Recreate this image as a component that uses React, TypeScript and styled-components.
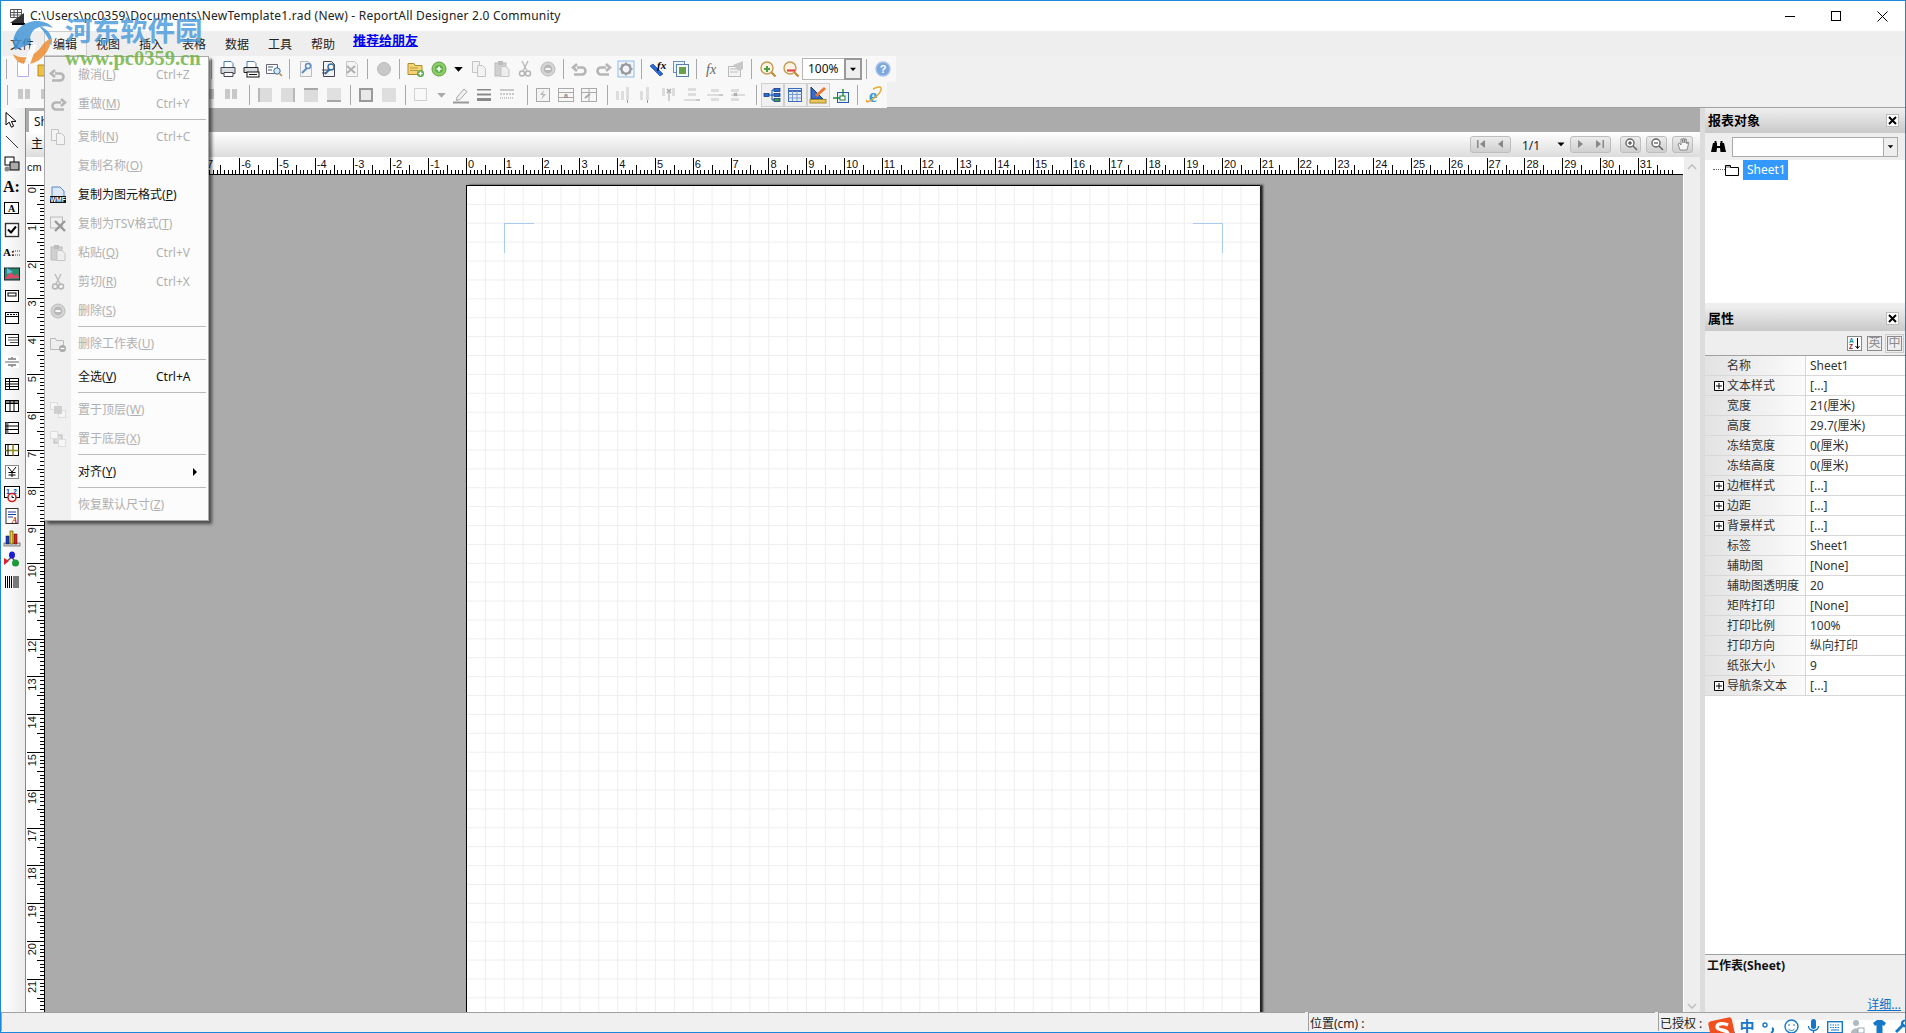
import React from 'react';
import styled, { createGlobalStyle } from 'styled-components';

const CJK = `"Noto Sans","Noto Sans CJK SC",sans-serif`;
const G = '#c4c4c4';

const Global = createGlobalStyle`
  html, body { margin: 0; padding: 0; overflow: hidden; background: #f0f0f0; }
  * { box-sizing: border-box; }
`;

const Win = styled.div`
  position: relative; width: 1906px; height: 1033px; display: flex; flex-direction: column;
  border: 1px solid #1a86dc; border-bottom: 0; background: #f0f0f0; font: 12px/1 ${CJK}; color: #111; overflow: hidden;
`;
const TitleBar = styled.div`height: 30px; background: #fff; display: flex; align-items: center; padding-left: 8px; flex: none;`;
const TitleText = styled.div`margin-left: 4px; font-size: 12px; color: #222; letter-spacing: 0.22px; padding-bottom: 1px;`;
const WinBtns = styled.div`margin-left: auto; display: flex; align-items: center; padding-right: 0;`;
const WinBtn = styled.div`width: 46px; height: 30px; display: flex; align-items: center; justify-content: center;`;
const MenuBar = styled.div`height: 25px; background: #eee; display: flex; flex: none; align-items: stretch;`;
const MenuItem = styled.div<{ $open?: boolean }>`
  width: 43px; padding-left: 9px; display: flex; align-items: center; color: #222; padding-top: 2px;
  ${p => p.$open ? 'background:#f6f6f6; box-shadow: inset 0 0 0 1px #ccc;' : ''}
`;
const Promo = styled.a`margin-left: 8px; font-size: 13px; font-weight: 700; color: #0000ee; text-decoration: underline; align-self: flex-start; padding-top: 3px;`;
const Bars = styled.div`flex: none; border-bottom: 1px solid #a0a0a0; height: 52px; background: #f0f0f0;`;
const Toolbar = styled.div<{ $first?: boolean }>`height: 26px; width: fit-content; display: flex; align-items: center; padding: 0 2px 0 ${p => p.$first ? 1 : 2}px; background: #f8f8f8;`;
const Slot = styled.div<{ $w?: number; $on?: boolean }>`
  width: ${p => p.$w ?? 23}px; height: 24px; flex: none; display: flex; align-items: center; justify-content: center;
  ${p => p.$on ? 'background:#f1f1f1; box-shadow: inset 0 0 0 1px #d0d0d0;' : ''}
`;
const SepSlot = styled.div`width: 9px; height: 24px; flex: none; display: flex; align-items: center; justify-content: center; &::before { content: ''; width: 1px; height: 20px; background: #a9a9a9; }`;
const ZoomCombo = styled.div`width: 60px; height: 22px; flex: none; display: flex; align-items: center; background: #fff; border: 1px solid #b5b5b5; padding-left: 5px; font-size: 12px;`;
const ZoomArrow = styled.div`margin-left: auto; width: 18px; height: 22px; margin-top: -1px; margin-bottom: -1px; margin-right: -1px; border: 2px solid #999; background: #eee; display: flex; align-items: center; justify-content: center;`;
const Main = styled.div`flex: 1; min-height: 0; display: flex;`;
const LeftTools = styled.div`width: 25px; flex: none; display: flex; flex-direction: column; background: linear-gradient(90deg,#fff,#ececec); border-right: 1px solid #8a8a8a; padding-top: 1px;`;
const LeftTool = styled.div`height: 22px; display: flex; align-items: center; justify-content: center; padding-right: 3px;`;
const Center = styled.div`flex: 1; min-width: 0; display: flex; flex-direction: column; background: #ababab;`;
const TabRow = styled.div`height: 24px; flex: none; display: flex; align-items: flex-end;`;
const Tab = styled.div`width: 60px; height: 21px; margin-left: 3px; background: #fff; font-size: 12px; padding: 5px 0 0 5px;`;
const NavStrip = styled.div`height: 25px; flex: none; display: flex; align-items: center; background: linear-gradient(#fff,#dcdcdc); padding-left: 5px; padding-bottom: 1px;`;
const NavLabel = styled.div`font-size: 12px; margin-right: auto;`;
const NavGroup = styled.div<{ $w: number }>`
  width: ${p => p.$w}px; height: 17px; flex: none; display: flex; align-items: center; justify-content: space-around;
  border: 1px solid #bdbdbd; border-radius: 3px; background: linear-gradient(#ececec,#cfcfcf);
`;
const PageCount = styled.div`width: 40px; flex: none; text-align: center; font-size: 12px; color: #222; padding-top: 3px;`;
const NavCaret = styled.div`width: 19px; flex: none; display: flex; justify-content: flex-start; padding-left: 3px;`;
const Work = styled.div`flex: 1; min-height: 0; display: flex;`;
const RulerArea = styled.div`flex: 1; min-width: 0; display: grid; grid-template-columns: 19px 1fr; grid-template-rows: 18px 1fr;`;
const CornerCm = styled.div`background: #fff; font: 11px "Liberation Sans", sans-serif; padding: 4px 0 0 1px; color: #111;`;
const HRulerBox = styled.div`background: #fff; overflow: hidden; height: 18px;`;
const VRulerBox = styled.div`background: #fff; overflow: hidden;`;
const Canvas = styled.div`background: #ababab; padding: 10px 0 0 421px; overflow: hidden; min-height: 0;`;
const Page = styled.div`
  position: relative; width: 794px; height: 1123px; background-color: #fff;
  border-top: 1px solid #000; border-left: 1px solid #000; box-shadow: 3px 0 2px #222;
  background-image: linear-gradient(#eeeeee 1px, transparent 1px), linear-gradient(90deg, #eeeeee 1px, transparent 1px);
  background-size: 18.9px 18.9px; background-position: -1px -1px;
`;
const Mark = styled.div<{ $right?: boolean }>`
  position: absolute; top: 37px; width: 30px; height: 30px; border-top: 1px solid #a9cbee;
  ${p => p.$right ? 'right: 37px; border-right: 1px solid #a9cbee;' : 'left: 37px; border-left: 1px solid #a9cbee;'}
`;
const VScroll = styled.div`width: 17px; flex: none; background: #eee; border-left: 1px solid #fff; display: flex; flex-direction: column; justify-content: space-between; align-items: center; padding: 5px 0 1px;`;
const Splitter = styled.div`width: 5px; flex: none; background: #dcdcdc;`;
const Right = styled.div`width: 200px; flex: none; display: flex; flex-direction: column; background: #eee;`;
const PanelHead = styled.div`height: 25px; flex: none; display: flex; align-items: center; padding: 0 6px 0 3px; background: linear-gradient(#efefef,#c9c9c9); font-size: 13px; font-weight: 700; color: #000;`;
const PanelClose = styled.div`margin-left: auto; width: 13px; height: 13px; background: #fff; border: 1px solid #bbb; display: flex; align-items: center; justify-content: center;`;
const SearchRow = styled.div`height: 27px; flex: none; display: flex; align-items: center; padding-left: 6px; background: #eee;`;
const SearchInput = styled.div`margin-left: 6px; width: 166px; height: 20px; background: #fff; border: 1px solid #aaa; display: flex; justify-content: flex-end;`;
const SearchBtn = styled.div`width: 14px; background: #eee; border-left: 1px solid #aaa; display: flex; align-items: center; justify-content: center;`;
const Tree = styled.div`height: 143px; flex: none; background: #fff; display: flex; align-items: flex-start; padding-left: 8px; margin-bottom: 3px;`;
const TreeDots = styled.div`width: 12px; height: 10px; border-bottom: 1px dotted #666; flex: none;`;
const TreeLabel = styled.div`height: 20px; margin-left: 4px; padding: 4px 2px 0 4px; background: #3399ff; color: #fff; font-size: 12px;`;
const TreeIcon = styled.div`height: 20px; display: flex; align-items: center;`;
const PropTools = styled.div`height: 25px; flex: none; display: flex; align-items: center; justify-content: flex-end; gap: 5px; padding-right: 3px; border-bottom: 1px solid #a0a0a0; background: #eee;`;
const ModeBtn = styled.div<{ $on?: boolean }>`
  width: 15px; height: 15px; border: 1px solid #8a8a8a; color: #8a8a8a; font-size: 12px; display: flex; align-items: center; justify-content: center;
  ${p => p.$on ? 'outline: 1px solid #ccc; outline-offset: 1px;' : ''}
`;
const SortBtn = styled.div`width: 15px; height: 15px;`;
const Grid = styled.div`flex: 1; min-height: 0; background: #fff; border-bottom: 1px solid #a0a0a0;`;
const Row = styled.div`height: 20px; display: flex; border-bottom: 1px solid #d8d8d8;`;
const RowLabel = styled.div`width: 101px; flex: none; display: flex; align-items: center; padding-left: 9px; border-right: 1px solid #d8d8d8; background: linear-gradient(90deg,#e3e3e3,#fbfbfb); color: #333;`;
const RowExp = styled.div`width: 13px; flex: none; display: flex; align-items: center;`;
const RowValue = styled.div`padding-left: 4px; display: flex; align-items: center; color: #333;`;
const Desc = styled.div`height: 57px; flex: none; position: relative; background: #eee; padding: 5px 2px; font-weight: 700; font-size: 12px;`;
const DescLink = styled.a`position: absolute; right: 4px; bottom: 1px; color: #0a6fc8; text-decoration: underline; font-weight: 400;`;
const Status = styled.div`height: 21px; flex: none; display: flex; gap: 3px; background: #f0f0f0; padding-bottom: 1px; border-bottom: 1px solid #1a86dc;`;
const StatusCell = styled.div<{ $w: number }>`width: ${p => p.$w}px; flex: none; border-top: 1px solid #a0a0a0; border-left: 1px solid #a0a0a0; padding: 5px 0 0 1px; color: #222;`;
const Ime = styled.div`position: absolute; left: 1734px; right: 0; top: 1019px; bottom: 0; background: #fff; display: flex; align-items: center; padding-left: 1px;`;
const ImeSlot = styled.div<{ $w?: number }>`width: ${p => p.$w ?? 22}px; flex: none; display: flex; justify-content: center; align-items: center; color: #1678c8; font-size: 15px; font-weight: 700;`;
const ImeLogo = styled.div`position: absolute; left: 1706px; top: 1015px; width: 30px; height: 18px; overflow: hidden;`;
const Menu = styled.div`
  position: absolute; left: 43px; top: 55px; width: 165px; height: 465px; padding: 3px 0; border: 1px solid #aaa;
  background: linear-gradient(90deg,#f0f0f0 26px,#fcfcfc 26px); box-shadow: 3px 3px 3px rgba(0,0,0,.55);
`;
const MenuRow = styled.div<{ $off?: boolean }>`height: 29px; display: flex; align-items: center; color: ${p => p.$off ? '#b0b0b0' : '#111'};`;
const MenuGlyph = styled.div`width: 26px; flex: none; display: flex; justify-content: center;`;
const MenuLabel = styled.div`width: 78px; flex: none; margin-left: 7px; white-space: nowrap;`;
const MenuKey = styled.div`white-space: nowrap; font-size: 12px;`;
const MenuArrow = styled.div`margin-left: 37px; width: 0; height: 0; border-left: 4px solid #000; border-top: 4px solid transparent; border-bottom: 4px solid transparent;`;
const MenuSep = styled.div`height: 4px; margin-left: 33px; margin-right: 2px; padding-top: 1px; &::before { content: ''; display: block; height: 1px; background: #bbb; }`;
const Water = styled.div`position: absolute; left: 8px; top: 12px; width: 200px; height: 60px; opacity: .82;`;
const WaterTitle = styled.div`position: absolute; left: 56px; top: 1px; font: 700 27.500px/1.1 "Noto Sans CJK SC", sans-serif; color: #4a9bdc; white-space: nowrap;`;
const WaterUrl = styled.div`position: absolute; left: 56px; top: 34px; font: 700 20.500px/1.1 "Liberation Serif", serif; color: #6cb23e; white-space: nowrap;`;
const WaterLogo = styled.div`position: absolute; left: -2px; top: 4px;`;

const Svg = ({ s = 18, v = 18, children }: { s?: number; v?: number; children: React.ReactNode }) => (
  <svg width={s} height={s} viewBox={`0 0 ${v} ${v}`} fill="none" style={{ display: 'block' }}>{children}</svg>
);
const Doc = ({ c = G }: { c?: string }) => <path d="M3.5 1.5h8l3 3v12h-11z" fill="#f4f4f4" stroke={c} />;
const Bars3 = ({ c = '#c8c8c8' }: { c?: string }) => <g fill={c}><rect x="3" y="3" width="5" height="10" /><rect x="10" y="3" width="5" height="10" /></g>;

const icons: Record<string, React.ReactNode> = {
  newDoc: <path d="M3.5 1.5h11v15h-11z" fill="#fff" stroke="#b8b0ea" />,
  open: <g><path d="M1 5h6l1 2h8v9H1z" fill="#f0c040" stroke="#b88a20" /></g>,
  hidden: <rect x="3" y="3" width="12" height="12" fill="#ddd" />,
  print: <g><path d="M5 1.5h7l2 2v4H5z" fill="#fff" stroke="#4a7db0" /><path d="M2 7.5h14v6H2z" fill="#d8dde2" stroke="#445" /><path d="M5 12.5h9v4H5z" fill="#fff" stroke="#445" /></g>,
  printP: <g><path d="M5 1.5h7l2 2v4H5z" fill="#fff" stroke="#4a7db0" /><path d="M2 7.5h14v5H2z" fill="#d8dde2" stroke="#222" /><rect x="5" y="12" width="12" height="5" fill="#fff" stroke="#111" /><path d="M7 14.5h8" stroke="#111" /></g>,
  preview: <g><path d="M1.5 4.5h11v9h-11z" fill="#fff" stroke="#667" /><path d="M3 7h5M3 10h4" stroke="#456" /><circle cx="12" cy="11" r="3.2" fill="#d6e6f5" stroke="#3a6ea0" /><path d="M14.5 13.5l2.5 2.5" stroke="#c08a30" strokeWidth="1.6" /></g>,
  wrench1: <g><Doc c="#bbb" /><path d="M5 13l5-5" stroke="#5a8cc0" strokeWidth="2" /><circle cx="11" cy="6" r="2.5" stroke="#5a8cc0" strokeWidth="1.4" /></g>,
  wrench2: <g><Doc c="#445" /><path d="M5 14l5-5" stroke="#3a6ea0" strokeWidth="2" /><circle cx="11" cy="7" r="3" stroke="#3a6ea0" strokeWidth="1.4" /><path d="M2 10h6M2 13h4" stroke="#445" /></g>,
  xdoc: <g><Doc /><path d="M4 6l8 7M12 6l-8 7" stroke="#b0b0b0" strokeWidth="2" /></g>,
  dot: <circle cx="9" cy="9" r="6.5" fill="#c8c8c8" stroke="#bbb" />,
  folderAdd: <g><path d="M1 3.5h6l1 2h7v9H1z" fill="#f4d470" stroke="#b08a30" /><path d="M3 8h8M3 10.5h8" stroke="#b89a50" /><circle cx="13.5" cy="13.5" r="3.5" fill="#58a848" /><path d="M11.5 13.5h4M13.5 11.5v4" stroke="#fff" strokeWidth="1.3" /></g>,
  plus: <g><circle cx="9" cy="9" r="7" fill="#8fcc6a" stroke="#5fa045" /><circle cx="9" cy="9" r="4" fill="#5db04a" /><path d="M6.5 9h5M9 6.5v5" stroke="#fff" strokeWidth="1.6" /></g>,
  caret: <path d="M4.5 7h9L9 12z" fill="#000" />,
  caretG: <path d="M4.5 7h9L9 12z" fill="#aaa" />,
  copy: <g><path d="M2.5 1.5h7v11h-7z" fill="#f3f3f3" stroke={G} /><path d="M7.5 5.5h5l3 3v8h-8z" fill="#f3f3f3" stroke={G} /></g>,
  paste: <g><rect x="2" y="3" width="11" height="13" fill="#d0d0d0" stroke="#bbb" /><rect x="5" y="1" width="5" height="4" fill="#bbb" /><path d="M8 6.5h5l3 3v7H8z" fill="#eee" stroke={G} /></g>,
  cut: <g><path d="M12 1L7 11M6 1l5 10" stroke="#bbb" strokeWidth="1.4" /><circle cx="6" cy="13.5" r="2.5" stroke="#b5b5b5" strokeWidth="1.5" /><circle cx="12" cy="13.5" r="2.5" stroke="#b5b5b5" strokeWidth="1.5" /></g>,
  minus: <g><circle cx="9" cy="9" r="7" fill="#d5d5d5" stroke="#bbb" /><circle cx="9" cy="9" r="4.3" fill="#b8b8b8" /><path d="M6.5 9h5" stroke="#fff" strokeWidth="1.8" /></g>,
  undo: <path d="M15 14.5H7a3.5 3.5 0 0 1 0-7h5M12 4l4 3.5-4 3.5" transform="matrix(-1 0 0 1 18 0)" stroke="#b5b5b5" strokeWidth="2.6" />,
  redo: <path d="M15 14.5H7a3.5 3.5 0 0 1 0-7h5M12 4l4 3.5-4 3.5" stroke="#b5b5b5" strokeWidth="2.6" />,
  gear: <g><rect x="1" y="1" width="16" height="16" fill="#f0f4fa" stroke="#8fbce8" /><circle cx="9" cy="9" r="4.6" stroke="#999" strokeWidth="2.4" /><path d="M9 2.5v2.5M9 13v2.5M2.5 9H5M13 9h2.5M4.5 4.5l2 2M11.5 11.5l2 2M13.5 4.5l-2 2M6.5 11.5l-2 2" stroke="#999" strokeWidth="1.8" /></g>,
  fxPen: <g><path d="M1 6l10 10 3-2L4 4z" fill="#2a6ad0" stroke="#123a8a" strokeWidth=".6" /><text x="8" y="9" fontFamily="Liberation Serif" fontStyle="italic" fontWeight="700" fontSize="11" fill="#000">fx</text></g>,
  images: <g><rect x="1.5" y="1.5" width="11" height="11" fill="#eaf2fa" stroke="#6a90b8" /><rect x="4.5" y="4.5" width="12" height="12" fill="#f4f8fc" stroke="#5a80a8" /><rect x="7" y="7" width="7" height="7" fill="#6aa04a" /></g>,
  fx: <text x="2" y="14" fontFamily="Liberation Serif" fontStyle="italic" fontSize="14" fill="#666">fx</text>,
  propDoc: <g><rect x="1.5" y="6.5" width="12" height="10" fill="#f4f4f4" stroke="#bbb" /><path d="M3 9h8M3 12h8" stroke="#bbb" /><path d="M6 5l10-4v8l-4 2z" fill="#c8c8c8" /></g>,
  zoomIn: <g><circle cx="8" cy="8" r="6" fill="#fbf4e4" stroke="#c89a50" strokeWidth="1.4" /><path d="M12.5 12.5l4 4" stroke="#c08a30" strokeWidth="2.2" /><path d="M5 9h6M8 6v6" stroke="#4da040" strokeWidth="2" /></g>,
  zoomOut: <g><circle cx="8" cy="8" r="6" fill="#fbf4e4" stroke="#c89a50" strokeWidth="1.4" /><path d="M12.5 12.5l4 4" stroke="#c08a30" strokeWidth="2.2" /><path d="M5 10.5h8" stroke="#e04848" strokeWidth="2.2" /></g>,
  help: <g><circle cx="9" cy="9" r="7" fill="#7ea8dc" stroke="#a8c4e8" strokeWidth="1.4" /><text x="9" y="13" textAnchor="middle" fontFamily="Liberation Sans" fontWeight="700" fontSize="11" fill="#fff">?</text></g>,
  barsA: <Bars3 />,
  alignL: <g><rect x="2" y="2" width="14" height="14" fill="#dcdcdc" /><rect x="2" y="2" width="2" height="14" fill="#b8b8b8" /></g>,
  alignR: <g><rect x="2" y="2" width="14" height="14" fill="#dcdcdc" /><rect x="14" y="2" width="2" height="14" fill="#b8b8b8" /></g>,
  alignT: <g><rect x="2" y="2" width="14" height="14" fill="#dcdcdc" /><rect x="2" y="2" width="14" height="2" fill="#a8a8a8" /></g>,
  alignB: <g><rect x="2" y="2" width="14" height="14" fill="#e0e0e0" /><rect x="2" y="14" width="14" height="2" fill="#a8a8a8" /></g>,
  box: <rect x="3" y="3" width="12" height="12" fill="#e8e8e8" stroke="#9a9a9a" strokeWidth="2" />,
  boxF: <rect x="2" y="2" width="14" height="14" fill="#dedede" />,
  gridD: <rect x="2.5" y="2.5" width="12" height="12" stroke="#aaa" strokeDasharray="1 1" />,
  pen: <g><path d="M5 11l7-8 3 2.5-7 8-3.5 1z" fill="#f0f0f0" stroke="#aaa" /><rect x="1" y="15.5" width="16" height="2" fill="#9a9a9a" /></g>,
  lines: <g fill="#8a8a8a"><rect x="2" y="3" width="14" height="1.5" /><rect x="2" y="7.5" width="14" height="2" /><rect x="2" y="12" width="14" height="3" /></g>,
  dashes: <g stroke="#9a9a9a"><path d="M2 4h14" /><path d="M2 8h14" strokeDasharray="2 1" /><path d="M2 12h14" strokeDasharray="1 1" /></g>,
  bolt: <g><rect x="2.5" y="2.5" width="13" height="13" fill="#f4f4f4" stroke="#aaa" /><path d="M10 4l-4 5h3l-2 5 5-6H9z" fill="#b8b8b8" /></g>,
  cellA: <g><rect x="1.5" y="2.5" width="15" height="13" fill="#f6f6f6" stroke="#aaa" /><path d="M1.5 6.5h15M1.5 11.5h15" stroke="#aaa" /><text x="9" y="11.5" textAnchor="middle" fontSize="7" fontWeight="700" fontFamily="Liberation Sans" fill="#888">a</text></g>,
  cellB: <g><rect x="1.5" y="2.5" width="15" height="13" fill="#f6f6f6" stroke="#aaa" /><path d="M1.5 6.5h15M9 2.5v13" stroke="#aaa" /><path d="M5 12l5-4" stroke="#aaa" strokeWidth="2" /></g>,
  distA: <g fill="#ddd"><rect x="2" y="5" width="3" height="9" /><rect x="7" y="5" width="3" height="9" /><rect x="12" y="1" width="3" height="13" /><path d="M13.5 14v3" stroke="#999" /></g>,
  distB: <g fill="#ddd"><rect x="3" y="5" width="3" height="9" /><rect x="9" y="1" width="3" height="13" /><path d="M10.5 14v3" stroke="#999" /></g>,
  distC: <g fill="#ddd"><rect x="2" y="2" width="3" height="8" /><rect x="12" y="2" width="3" height="8" /><path d="M7 3l4 4M11 3l-4 4" stroke="#aaa" strokeWidth="1.5" /><path d="M9 7v8" stroke="#aaa" /></g>,
  distD: <g fill="#ddd"><rect x="5" y="2" width="8" height="3" /><rect x="5" y="7" width="8" height="3" /><rect x="1" y="13" width="12" height="2" /><path d="M13 14h4" stroke="#999" /></g>,
  distE: <g fill="#ddd"><rect x="5" y="3" width="8" height="3" /><rect x="1" y="8" width="12" height="2" /><rect x="5" y="12" width="8" height="3" /><path d="M13 9h4" stroke="#999" /></g>,
  distF: <g fill="#ddd"><rect x="2" y="3" width="8" height="3" /><rect x="2" y="8" width="14" height="2" /><rect x="2" y="12" width="8" height="3" /><path d="M5 7l3 3M8 7l-3 3" stroke="#aaa" strokeWidth="1.5" /></g>,
  tree: <g><path d="M9 4v10M5 9h4M9 4h2M9 9h2M9 14h2" stroke="#0a50a8" /><g fill="#2a6ac8" stroke="#0a2a80" strokeWidth=".7"><rect x="1" y="7.5" width="5" height="3" /><rect x="11" y="2.5" width="6" height="3" /><rect x="11" y="7.5" width="6" height="3" /><rect x="11" y="12.5" width="6" height="3" fill="#3a9a50" /></g></g>,
  sheet: <g><rect x="2.5" y="2.5" width="13" height="13" fill="#e4eefa" stroke="#3a6ab8" /><path d="M2.5 5h13" stroke="#3a6ab8" strokeWidth="2" /><path d="M2.5 8.5h13M2.5 12h13M6.5 5v10M11 5v10" stroke="#7a9ad0" /></g>,
  ruler: <g><path d="M2 1v12h12z" fill="#3a6ac8" stroke="#123a8a" /><path d="M6 9l9-8 2 2-9 8z" fill="#e87830" /><rect x="1" y="13.5" width="16" height="3.5" fill="#e8c860" stroke="#a08830" /></g>,
  nodeBox: <g><rect x="5.5" y="6.5" width="11" height="10" fill="#e8f0fa" stroke="#2a5ab0" /><rect x="8" y="10" width="5" height="4" fill="#fff" stroke="#2a7a40" /><path d="M1 12h7M11 10V3" stroke="#1a8a30" strokeWidth="1.4" /></g>,
  ie: <g><text x="9" y="15.5" textAnchor="middle" fontFamily="Liberation Serif" fontWeight="700" fontSize="19" fill="#3a9ae0">e</text><path d="M3 14C1 17 5 16 9 13c4-3 9-8 8-11-1-2-6 0-8 1" stroke="#e8a830" strokeWidth="1.4" /></g>,
  cursor: <path d="M3 1.5v12.5l3.2-2.8 2.2 5 2.2-1-2.2-4.8H13z" fill="#fff" stroke="#000" />,
  line: <path d="M3 3l12 12" stroke="#333" />,
  shapes: <g><rect x="2" y="2" width="9" height="8" fill="#fff" stroke="#000" /><rect x="7" y="7" width="9" height="8" fill="#aaa" stroke="#000" /><circle cx="4" cy="14" r="2.5" fill="#888" /></g>,
  aColon: <text x="0" y="15" fontFamily="Liberation Serif" fontWeight="700" fontSize="16" fill="#000">A:</text>,
  aBox: <g><rect x="1.5" y="3.5" width="14" height="11" fill="#fff" stroke="#000" /><text x="8.5" y="12.5" textAnchor="middle" fontFamily="Liberation Serif" fontWeight="700" fontSize="10" fill="#000">A</text></g>,
  check: <g><rect x="2.5" y="2.5" width="13" height="13" fill="#fff" stroke="#333" strokeWidth="1.4" /><path d="M5 8.5l3 3 5-6" stroke="#000" strokeWidth="2" /></g>,
  aDots: <g><text x="0" y="13" fontFamily="Liberation Serif" fontWeight="700" fontSize="11" fill="#000">A:</text><path d="M10 8h8M10 12h8" stroke="#444" strokeDasharray="1 1" /></g>,
  image: <g><rect x="1.5" y="3" width="15" height="12" fill="#2a8a6a" stroke="#123" /><path d="M1.5 14l6-7 4 4 2-2 3 3v1z" fill="#e04868" /><path d="M4 3l6 4-6 2z" fill="#58c0e8" /></g>,
  frame: <g><rect x="2.5" y="3.5" width="13" height="11" fill="#fff" stroke="#000" /><rect x="5" y="6" width="8" height="3" stroke="#000" /></g>,
  win: <g><rect x="2.5" y="3.5" width="13" height="11" fill="#fff" stroke="#000" /><path d="M2.5 7.5h13" stroke="#000" /><path d="M4 5.5h10" stroke="#000" strokeDasharray="2 1" /></g>,
  rows: <g><rect x="2.5" y="3.5" width="13" height="11" fill="#fff" stroke="#000" /><path d="M5 6.5h10M5 9h10M7 11.5h8" stroke="#555" /></g>,
  split: <g><rect x="2" y="3" width="14" height="12" fill="#fff" /><path d="M2 9h14" stroke="#666" /><path d="M5 6h3M10 6h3M5 12h3M10 12h3M9 4v3M9 11v3" stroke="#333" /></g>,
  table: <g><rect x="2.5" y="3.5" width="13" height="11" fill="#fff" stroke="#000" /><path d="M2.5 6.5h13M2.5 9h13M2.5 11.5h13M6.5 3.5v11" stroke="#000" /></g>,
  cols: <g><rect x="2.5" y="3.5" width="13" height="11" fill="#fff" stroke="#000" /><path d="M2.5 3.5h13v3h-13z" fill="#888" stroke="#000" /><path d="M7 3.5v11M11 3.5v11" stroke="#000" /></g>,
  rowsT: <g><rect x="2.5" y="3.5" width="13" height="11" fill="#fff" stroke="#000" /><rect x="2.5" y="3.5" width="3" height="11" fill="#777" /><path d="M2.5 7h13M2.5 10.5h13" stroke="#000" /></g>,
  cross: <g><rect x="2.5" y="3.5" width="13" height="11" fill="#fff" stroke="#000" /><path d="M2.5 9.5h13M10 3.5v11" stroke="#8a8a20" strokeWidth="1.6" /><path d="M5 3.5v11" stroke="#000" /></g>,
  yen: <g><rect x="2.5" y="2.5" width="13" height="13" fill="#fff" stroke="#888" /><path d="M5 4l4 5 4-5M9 9v5M5.5 9.5h7M5.5 12h7" stroke="#000" /></g>,
  cal: <g><rect x="1.5" y="1.5" width="15" height="11" fill="#fff" stroke="#000" /><text x="3" y="8.5" fontFamily="Liberation Sans" fontWeight="700" fontSize="7" fill="#0a3aa8">1</text><text x="10" y="8.5" fontFamily="Liberation Sans" fontWeight="700" fontSize="7" fill="#0a3aa8">2</text><circle cx="9" cy="12.5" r="4" fill="#fff" stroke="#d02020" strokeWidth="1.6" /><path d="M9 10.5v2h2" stroke="#000" /></g>,
  report: <g><rect x="3" y="1.5" width="12" height="15" fill="#fff" stroke="#333" /><path d="M5 5h8M5 7.5h8M5 10h5" stroke="#1a3aa8" /><text x="9" y="15.5" fontFamily="Liberation Serif" fontStyle="italic" fontWeight="700" fontSize="8" fill="#d02020">A</text></g>,
  chart: <g><rect x="1" y="14" width="16" height="3" fill="#ddd" stroke="#333" strokeWidth=".6" /><rect x="3" y="7" width="3" height="8" fill="#1a3ad8" stroke="#111" strokeWidth=".5" /><rect x="7" y="2" width="3" height="13" fill="#e8d020" stroke="#111" strokeWidth=".5" /><rect x="11" y="5" width="3" height="10" fill="#e02020" stroke="#111" strokeWidth=".5" /></g>,
  net: <g><path d="M4 10l5-4 5 8" stroke="#555" strokeWidth="1.5" /><ellipse cx="9" cy="4" rx="3" ry="3.5" fill="#1a1ad8" /><circle cx="12.5" cy="12" r="3.5" fill="#1a9a3a" /><path d="M1 7l5 3-5 4z" fill="#e02030" /></g>,
  barcode: <path d="M2.500 3v12M4.500 3v12M6.500 3v12M8.500 3v12M11 3v12M13 3v12M15 3v12" stroke="#000" />,
  wmf: <g><path d="M3 1h8l4 4v6H3z" fill="#dce8f8" stroke="#5a8ac0" /><rect x="1" y="10" width="16" height="7" fill="#111" /><text x="9" y="16" textAnchor="middle" fontFamily="Liberation Sans" fontWeight="700" fontSize="6.5" fill="#fff">WMF</text></g>,
  tsv: <g><rect x="1.5" y="2" width="12" height="11" fill="#f0f0f0" stroke="#bbb" /><path d="M6 6l10 10M16 6L6 16" stroke="#999" strokeWidth="2.4" /></g>,
  delSheet: <g><path d="M1.5 3.5h5l1 2h7v9h-13z" fill="#eee" stroke="#bbb" /><circle cx="13.5" cy="13.5" r="3.5" fill="#aaa" /><path d="M11.5 13.5h4" stroke="#fff" strokeWidth="1.3" /></g>,
  top: <g><rect x="1.5" y="1.5" width="7" height="7" fill="#f6f6f6" stroke="#ddd" /><rect x="9.5" y="9.5" width="7" height="7" fill="#f6f6f6" stroke="#ddd" /><rect x="5" y="5" width="8" height="8" fill="#cfcfcf" /></g>,
  bottom: <g><rect x="5" y="5" width="8" height="8" fill="#dcdcdc" stroke="#bbb" /><rect x="1.5" y="1.5" width="7" height="7" fill="#f6f6f6" stroke="#ddd" /><rect x="9.5" y="9.5" width="7" height="7" fill="#f6f6f6" stroke="#ddd" /></g>,
};

const Ic = ({ n, s }: { n: string; s?: number }) => <Svg s={s}>{icons[n]}</Svg>;

type T = string | [string, number];
const row1: T[] = ['|', 'newDoc', 'open', 'hidden', 'hidden', 'hidden', 'hidden', 'hidden', 'hidden', ['gap', 12], '|', 'print', 'printP', 'preview', '|', 'wrench1', 'wrench2', 'xdoc', '|', 'dot', '|', 'folderAdd', 'plus', ['caret', 17], 'copy', 'paste', 'cut', 'minus', '|', 'undo', 'redo', 'gear', '|', 'fxPen', 'images', '|', 'fx', 'propDoc', '|', 'zoomIn', 'zoomOut', 'COMBO', '|', 'help'];
const row2: T[] = ['|', 'barsA', 'barsA', 'hidden', 'hidden', 'hidden', 'hidden', 'hidden', 'hidden', 'barsA', 'barsA', ['gap', 2.5], '|', 'alignL', 'alignR', 'alignT', 'alignB', '|', 'box', 'boxF', '|', 'gridD', ['caretG', 17], 'pen', 'lines', 'dashes', ['gap', 4], '|', 'bolt', 'cellA', 'cellB', ['gap', 2], '|', 'distA', 'distB', 'distC', 'distD', 'distE', 'distF', ['gap', 2], '|', '*tree', '*sheet', '*ruler', 'nodeBox', '|', 'ie'];

const Tools = ({ items, first }: { items: T[]; first?: boolean }) => (
  <Toolbar $first={first}>
    {items.map((t, i) => {
      if (t === '|') return <SepSlot key={i} />;
      if (t === 'COMBO') return <ZoomCombo key={i}>100%<ZoomArrow><Svg s={12}>{icons.caret}</Svg></ZoomArrow></ZoomCombo>;
      if (Array.isArray(t)) return t[0] === 'gap' ? <Slot key={i} $w={t[1]} /> : <Slot key={i} $w={t[1]}><Ic n={t[0]} /></Slot>;
      const on = t.startsWith('*');
      return <Slot key={i} $on={on}><Ic n={on ? t.slice(1) : t} /></Slot>;
    })}
  </Toolbar>
);

const CM = 37.8;
const HRuler = () => {
  const o = 421;
  const cms = Array.from({ length: 44 }, (_, i) => i - 12);
  const ticks: React.ReactNode[] = [];
  for (const c of cms) {
    for (let k = 0; k < 10; k++) {
      const x = Math.round(o + (c + k / 10) * CM) + 0.5;
      if (x < 0 || x > 1640) continue;
      const y1 = k === 0 ? 1 : k === 5 ? 8 : 13;
      ticks.push(<path key={`${c}-${k}`} d={`M${x} ${y1}V17`} stroke="#000" />);
    }
  }
  return (
    <svg width="1638" height="18" style={{ display: 'block' }}>
      <path d="M0 17.5H1638" stroke="#000" />
      {ticks}
      {cms.map(c => <text key={c} x={o + c * CM + 2} y="11" fontFamily="Liberation Sans" fontSize="11" fill="#111">{c}</text>)}
    </svg>
  );
};
const VRuler = () => {
  const o = 10;
  const cms = Array.from({ length: 22 }, (_, i) => i);
  const ticks: React.ReactNode[] = [];
  for (const c of cms) {
    for (let k = 0; k < 10; k++) {
      const y = Math.round(o + (c + k / 10) * CM) + 0.5;
      const x1 = k === 0 ? 1 : k === 5 ? 11 : 14;
      ticks.push(<path key={`${c}-${k}`} d={`M${x1} ${y}H18`} stroke="#000" />);
    }
  }
  return (
    <svg width="19" height="840" style={{ display: 'block' }}>
      <path d="M18.5 0V840" stroke="#000" />
      {ticks}
      {cms.map(c => {
        const y = o + c * CM + 2;
        return <text key={c} x="10" y={y} transform={`rotate(-90 10 ${y})`} textAnchor="end" fontFamily="Liberation Sans" fontSize="11" fill="#111">{c}</text>;
      })}
    </svg>
  );
};

const leftTools = ['cursor', 'line', 'shapes', 'aColon', 'aBox', 'check', 'aDots', 'image', 'frame', 'win', 'rows', 'split', 'table', 'cols', 'rowsT', 'cross', 'yen', 'cal', 'report', 'chart', 'net', 'barcode'];

type MI = { l?: string; u?: string; k?: string; i?: string; off?: boolean; sep?: boolean; arrow?: boolean };
const menu: MI[] = [
  { l: '撤消', u: 'L', k: 'Ctrl+Z', i: 'undo', off: true },
  { l: '重做', u: 'M', k: 'Ctrl+Y', i: 'redo', off: true },
  { sep: true },
  { l: '复制', u: 'N', k: 'Ctrl+C', i: 'copy', off: true },
  { l: '复制名称', u: 'O', off: true },
  { l: '复制为图元格式', u: 'P', i: 'wmf' },
  { l: '复制为TSV格式', u: 'T', i: 'tsv', off: true },
  { l: '粘贴', u: 'Q', k: 'Ctrl+V', i: 'paste', off: true },
  { l: '剪切', u: 'R', k: 'Ctrl+X', i: 'cut', off: true },
  { l: '删除', u: 'S', i: 'minus', off: true },
  { sep: true },
  { l: '删除工作表', u: 'U', i: 'delSheet', off: true },
  { sep: true },
  { l: '全选', u: 'V', k: 'Ctrl+A' },
  { sep: true },
  { l: '置于顶层', u: 'W', i: 'top', off: true },
  { l: '置于底层', u: 'X', i: 'bottom', off: true },
  { sep: true },
  { l: '对齐', u: 'Y', arrow: true },
  { sep: true },
  { l: '恢复默认尺寸', u: 'Z', off: true },
];

const props: [string, string, boolean][] = [
  ['名称', 'Sheet1', false], ['文本样式', '[...]', true], ['宽度', '21(厘米)', false], ['高度', '29.7(厘米)', false],
  ['冻结宽度', '0(厘米)', false], ['冻结高度', '0(厘米)', false], ['边框样式', '[...]', true], ['边距', '[...]', true],
  ['背景样式', '[...]', true], ['标签', 'Sheet1', false], ['辅助图', '[None]', false], ['辅助图透明度', '20', false],
  ['矩阵打印', '[None]', false], ['打印比例', '100%', false], ['打印方向', '纵向打印', false], ['纸张大小', '9', false], ['导航条文本', '[...]', true],
];

const Close = () => <PanelClose><Svg s={9} v={9}><path d="M1 1l7 7M8 1L1 8" stroke="#000" strokeWidth="2" /></Svg></PanelClose>;
const navI = (d: string) => <Svg s={12} v={12}><path d={d} fill="#888" /></Svg>;

export default function App() {
  return (
    <>
      <Global />
      <Win>
        <TitleBar>
          <Svg s={17} v={17}>
            <path d="M1.5 1.5h11v8h-11zM1.5 4.5h11M1.5 7h11M5 1.5v8M8.5 1.5v8" stroke="#555" />
            <path d="M1 15L15 5v10z" fill="#333" /><path d="M3 16h13" stroke="#000" strokeWidth="2" />
          </Svg>
          <TitleText>C:\Users\pc0359\Documents\NewTemplate1.rad (New) - ReportAll Designer 2.0 Community</TitleText>
          <WinBtns>
            <WinBtn><svg width="10" height="10"><path d="M0 5.5H10" stroke="#000" /></svg></WinBtn>
            <WinBtn><svg width="10" height="10"><rect x=".5" y=".5" width="9" height="9" fill="none" stroke="#000" /></svg></WinBtn>
            <WinBtn><svg width="11" height="11"><path d="M.5 .5l10 10M10.5 .5l-10 10" stroke="#000" /></svg></WinBtn>
          </WinBtns>
        </TitleBar>
        <MenuBar>
          {['文件', '编辑', '视图', '插入', '表格', '数据', '工具', '帮助'].map((m, i) => <MenuItem key={m} $open={i === 1}>{m}</MenuItem>)}
          <Promo>推荐给朋友</Promo>
        </MenuBar>
        <Bars>
          <Tools items={row1} first />
          <Tools items={row2} />
        </Bars>
        <Main>
          <LeftTools>{leftTools.map((t, i) => <LeftTool key={i}><Ic n={t} /></LeftTool>)}</LeftTools>
          <Center>
            <TabRow><Tab>Sheet1</Tab></TabRow>
            <NavStrip>
              <NavLabel>主</NavLabel>
              <NavGroup $w={41}>{navI('M2 2h1.5v8H2zM10 2v8L5 6z')}{navI('M9 2v8L4 6z')}</NavGroup>
              <PageCount>1/1</PageCount>
              <NavCaret><Svg s={14}>{icons.caret}</Svg></NavCaret>
              <NavGroup $w={41}>{navI('M3 2v8l5-4z')}{navI('M2 2v8l5-4zM8.500 2H10v8H8.500z')}</NavGroup>
              <Slot $w={9} />
              <NavGroup $w={21}><Svg s={14} v={14}><circle cx="6" cy="6" r="4" fill="#fff" stroke="#666" strokeWidth="1.4" /><path d="M9 9l4 4" stroke="#666" strokeWidth="1.6" /><path d="M4 6h4M6 4v4" stroke="#333" /></Svg></NavGroup>
              <Slot $w={5} />
              <NavGroup $w={21}><Svg s={14} v={14}><circle cx="6" cy="6" r="4" fill="#fff" stroke="#666" strokeWidth="1.4" /><path d="M9 9l4 4" stroke="#666" strokeWidth="1.6" /><path d="M4 6h4" stroke="#333" /></Svg></NavGroup>
              <Slot $w={5} />
              <NavGroup $w={21}><Svg s={14} v={14}><path d="M4 13L2 7l1.500-1L5 8V2l1.200 0L7 6V1.500h1.200L9 6V2h1.200l.6 5 1-2 1 .5L11 13z" fill="#f6f6f6" stroke="#777" strokeWidth=".8" /></Svg></NavGroup>
              <Slot $w={7} />
            </NavStrip>
            <Work>
              <RulerArea>
                <CornerCm>cm</CornerCm>
                <HRulerBox><HRuler /></HRulerBox>
                <VRulerBox><VRuler /></VRulerBox>
                <Canvas>
                  <Page><Mark /><Mark $right /></Page>
                </Canvas>
              </RulerArea>
              <VScroll>
                <Svg s={10} v={10}><path d="M1 7l4-4 4 4" stroke="#c0c0c0" strokeWidth="1.6" /></Svg>
                <Svg s={10} v={10}><path d="M1 3l4 4 4-4" stroke="#c0c0c0" strokeWidth="1.6" /></Svg>
              </VScroll>
            </Work>
          </Center>
          <Splitter />
          <Right>
            <PanelHead>报表对象<Close /></PanelHead>
            <SearchRow>
              <Svg s={15} v={15}><path d="M2 4h4v3h3V4h4l2 9H9.500L9 9H6l-.5 4H0z" fill="#000" /><path d="M3.500 2h2v2h-2zM9.500 2h2v2h-2z" fill="#000" /></Svg>
              <SearchInput><SearchBtn><Svg s={11} v={18}>{icons.caret}</Svg></SearchBtn></SearchInput>
            </SearchRow>
            <Tree>
              <TreeDots />
              <TreeIcon><Svg s={14} v={14}><path d="M.5 2.500h5v2h8v8H.5z" fill="#fff" stroke="#000" /><path d="M1 3h4v2H1z" fill="#aaa" /></Svg></TreeIcon>
              <TreeLabel>Sheet1</TreeLabel>
            </Tree>
            <PanelHead>属性<Close /></PanelHead>
            <PropTools>
              <SortBtn><Svg s={15} v={15}><rect x=".5" y=".5" width="14" height="14" fill="#fff" stroke="#888" /><text x="2" y="7" fontFamily="Liberation Sans" fontSize="6.500" fontWeight="700" fill="#0a8a8a">A</text><text x="2" y="13" fontFamily="Liberation Sans" fontSize="6.500" fontWeight="700" fill="#a01010">Z</text><path d="M10.500 2v10M8.500 10l2 2.500 2-2.500" stroke="#000" /></Svg></SortBtn>
              <ModeBtn>英</ModeBtn>
              <ModeBtn $on>中</ModeBtn>
            </PropTools>
            <Grid>
              {props.map(([k, v, e]) => (
                <Row key={k}>
                  <RowLabel>
                    <RowExp>{e && <svg width="10" height="10"><path d="M.5 .5h9v9h-9zM2 5h6M5 2v6" fill="#fff" stroke="#000" /></svg>}</RowExp>
                    {k}
                  </RowLabel>
                  <RowValue>{v}</RowValue>
                </Row>
              ))}
            </Grid>
            <Desc>工作表(Sheet)<DescLink>详细...</DescLink></Desc>
          </Right>
        </Main>
        <Status>
          <StatusCell $w={1304} />
          <StatusCell $w={347}>位置(cm) :</StatusCell>
          <StatusCell $w={249}>已授权 :</StatusCell>
        </Status>
        <Ime>
          <ImeSlot>中</ImeSlot>
          <ImeSlot><Svg s={16} v={16}><circle cx="4" cy="6" r="2" stroke="#1678c8" strokeWidth="1.4" /><path d="M11 9c2 1 1 4-1 5" stroke="#1678c8" strokeWidth="2" /></Svg></ImeSlot>
          <ImeSlot><Svg s={15} v={15}><circle cx="7.500" cy="7.500" r="6.500" stroke="#1678c8" strokeWidth="1.400" /><path d="M5 5v2M10 5v2M4.500 10c2 2 4 2 6 0" stroke="#1678c8" /></Svg></ImeSlot>
          <ImeSlot><Svg s={15} v={15}><rect x="5" y="0" width="5" height="10" rx="2.500" fill="#1678c8" /><path d="M2.500 7c0 6 10 6 10 0M7.500 12v3" stroke="#1678c8" strokeWidth="1.400" /></Svg></ImeSlot>
          <ImeSlot><Svg s={16} v={16}><rect x=".7" y="2.700" width="14.600" height="11" stroke="#1678c8" strokeWidth="1.400" /><path d="M3 6h10M3 8.500h10" stroke="#1678c8" strokeDasharray="1.500 1" /><path d="M4 11h8" stroke="#1678c8" /></Svg></ImeSlot>
          <ImeSlot><Svg s={15} v={15}><circle cx="6" cy="4" r="3" fill="#b0b8c0" /><path d="M1 14c0-6 10-6 10 0z" fill="#b0b8c0" /><rect x="8" y="9" width="6" height="5" fill="#fff" stroke="#98a8b8" /></Svg></ImeSlot>
          <ImeSlot><Svg s={15} v={15}><path d="M5 1h5l4 3-2 3-1.500-1v9h-6V6L3 7 1 4z" fill="#1678c8" /></Svg></ImeSlot>
          <ImeSlot><Svg s={15} v={15}><path d="M14 3l-3 3-2-2 3-3C9 0 6 2 7 6L1 12l2 2 6-6c4 1 6-2 5-5z" fill="#1678c8" /></Svg></ImeSlot>
        </Ime>
        <ImeLogo>
          <Svg s={30} v={30}>
            <rect x="3" y="3" width="24" height="24" rx="3" fill="#f0501e" transform="rotate(-12 15 15)" />
            <path d="M21 9c-4-2-11-2-11 2 0 4 11 2 11 7 0 4-8 4-12 2" stroke="#fff" strokeWidth="3.4" />
          </Svg>
        </ImeLogo>
        <Menu>
          {menu.map((m, i) => m.sep ? <MenuSep key={i} /> : (
            <MenuRow key={i} $off={m.off}>
              <MenuGlyph>{m.i && <Ic n={m.i} />}</MenuGlyph>
              <MenuLabel>{m.l}(<u>{m.u}</u>)</MenuLabel>
              {m.k && <MenuKey>{m.k}</MenuKey>}
              {m.arrow && <MenuArrow />}
            </MenuRow>
          ))}
        </Menu>
        <Water>
          <WaterLogo>
            <Svg s={52} v={52}>
              <path d="M8 33C2 18 14 4 30 4c6 0 12 2 16 7-7-3-13-2-18 1-4 3-6 9-5 15z" fill="#3f93d6" />
              <path d="M32 9c10 3 15 11 12 20-2-8-6-13-12-20z" fill="#3f93d6" />
              <path d="M6 37c8 6 20 4 28-7 3-4 5-7 10-8-1 14-13 26-26 25-5 0-10-4-12-10z" fill="#ef8a2c" />
              <path d="M17 47l8-22 5 3-7 19z" fill="#fff" />
            </Svg>
          </WaterLogo>
          <WaterTitle>河东软件园</WaterTitle>
          <WaterUrl>www.pc0359.cn</WaterUrl>
        </Water>
      </Win>
    </>
  );
}
